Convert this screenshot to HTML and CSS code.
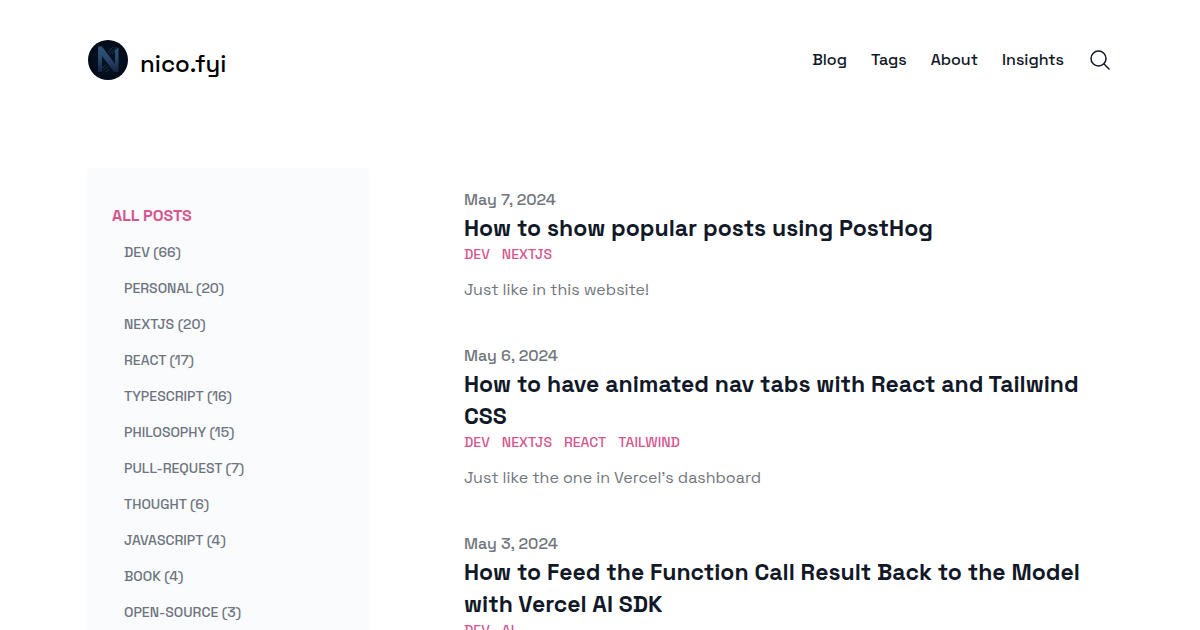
FILE: index.html
```html
<!DOCTYPE html>
<html lang="en">
<head>
<meta charset="utf-8">
<meta name="viewport" content="width=device-width, initial-scale=1">
<title>nico.fyi</title>
<link rel="stylesheet" href="styles.css">
</head>
<body>
<div class="container">
  <header class="header">
    <a class="brand" href="#">
      <svg class="brand-logo" viewBox="0 0 40 40" aria-hidden="true">
        <defs>
          <linearGradient id="n" x1="0" y1="0" x2="0" y2="1">
            <stop offset="0" stop-color="#2f5574"/>
            <stop offset="0.5" stop-color="#28476c"/>
            <stop offset="1" stop-color="#13233f"/>
          </linearGradient>
          <radialGradient id="bg">
            <stop offset="0" stop-color="#071426"/>
            <stop offset="1" stop-color="#020b19"/>
          </radialGradient>
        </defs>
        <circle cx="20" cy="20" r="20" fill="url(#bg)"/>
        <path d="M10 6.500v25.500h4V16l12 16h4.500V7.500L27 10v14L14 6.500z" fill="url(#n)"/>
        <path d="M20 12l5-5M21.500 14l7-7M24 14l6-6M14 28l4-3M15 30.500l5-4M18 32l3-3" stroke="#34526c" stroke-width="0.800" opacity="0.700"/>
      </svg>
      <span class="brand-name">nico.fyi</span>
    </a>
    <nav class="nav">
      <a href="#">Blog</a>
      <a href="#">Tags</a>
      <a href="#">About</a>
      <a href="#">Insights</a>
      <button class="search" type="button" aria-label="Search">
        <svg viewBox="0 0 24 24" fill="none" stroke="currentColor" stroke-width="1.5" stroke-linecap="round" stroke-linejoin="round" aria-hidden="true"><path d="M21 21l-5.197-5.197m0 0A7.5 7.5 0 105.196 5.196a7.5 7.5 0 0010.607 10.607z"/></svg>
      </button>
    </nav>
  </header>
  <main class="main">
    <aside class="sidebar">
      <h3 class="all-posts">All Posts</h3>
      <ul class="tag-list">
        <li><a href="#">dev (66)</a></li>
        <li><a href="#">personal (20)</a></li>
        <li><a href="#">nextjs (20)</a></li>
        <li><a href="#">react (17)</a></li>
        <li><a href="#">typescript (16)</a></li>
        <li><a href="#">philosophy (15)</a></li>
        <li><a href="#">pull-request (7)</a></li>
        <li><a href="#">thought (6)</a></li>
        <li><a href="#">javascript (4)</a></li>
        <li><a href="#">book (4)</a></li>
        <li><a href="#">open-source (3)</a></li>
      </ul>
    </aside>
    <div class="posts">
      <article class="post">
        <time datetime="2024-05-07">May 7, 2024</time>
        <h2><a href="#">How to show popular posts using PostHog</a></h2>
        <div class="tags"><a href="#">dev</a><a href="#">nextjs</a></div>
        <p>Just like in this website!</p>
      </article>
      <article class="post">
        <time datetime="2024-05-06">May 6, 2024</time>
        <h2><a href="#">How to have animated nav tabs with React and Tailwind CSS</a></h2>
        <div class="tags"><a href="#">dev</a><a href="#">nextjs</a><a href="#">react</a><a href="#">tailwind</a></div>
        <p>Just like the one in Vercel’s dashboard</p>
      </article>
      <article class="post">
        <time datetime="2024-05-03">May 3, 2024</time>
        <h2><a href="#">How to Feed the Function Call Result Back to the Model with Vercel AI SDK</a></h2>
        <div class="tags"><a href="#">dev</a><a href="#">ai</a></div>
      </article>
    </div>
  </main>
</div>
</body>
</html>
```
FILE: styles.css
```css
* { box-sizing: border-box; margin: 0; padding: 0; }

body {
  height: 100vh;
  overflow: hidden;
  background: #fff;
  color: #111827;
  font-family: "Space Grotesk", Inter, sans-serif;
  font-size: 16px;
  line-height: 24px;
}

a { color: inherit; text-decoration: none; }
ul { list-style: none; }

.container { max-width: 1072px; margin: 0 auto; padding: 0 24px; }

.header {
  display: flex;
  align-items: center;
  justify-content: space-between;
  padding: 40px 0;
}
.brand { display: flex; align-items: center; gap: 12px; color: #000; }
.brand-logo { width: 40px; height: 40px; }
.brand-name { padding-top: 8px; font-size: 24px; line-height: 32px; font-weight: 500; }

.nav { display: flex; align-items: center; gap: 24px; font-weight: 500; }
.search { width: 24px; height: 24px; border: 0; background: none; color: inherit; cursor: pointer; }
.search svg { display: block; width: 24px; height: 24px; }

.main { display: flex; gap: 96px; padding-top: 48px; }

.sidebar {
  flex: 0 0 280px;
  padding: 36px 24px 16px;
  border-radius: 4px;
  background: #f9fbfd;
  box-shadow: 0 2px 4px rgba(107, 114, 128, 0.06);
}
.all-posts { color: #d6568f; font-size: 16px; line-height: 24px; font-weight: 700; text-transform: uppercase; }
.tag-list { display: flex; flex-direction: column; gap: 12px; padding: 12px 12px 0; }
.tag-list li { display: flex; }
.tag-list a { color: #6e747d; font-size: 14px; line-height: 24px; font-weight: 500; text-transform: uppercase; }

.posts { flex: 1; min-width: 0; }
.post { padding: 20px 0; }
.post time { display: block; color: #71767d; font-weight: 500; }
.post h2 { font-size: 23px; line-height: 32px; font-weight: 700; }
.tags { display: flex; flex-wrap: wrap; gap: 12px; margin-bottom: 12px; }
.tags a { color: #d6568f; font-size: 14px; line-height: 20px; font-weight: 500; text-transform: uppercase; }
.post p { color: #71767d; line-height: 28px; }
```
